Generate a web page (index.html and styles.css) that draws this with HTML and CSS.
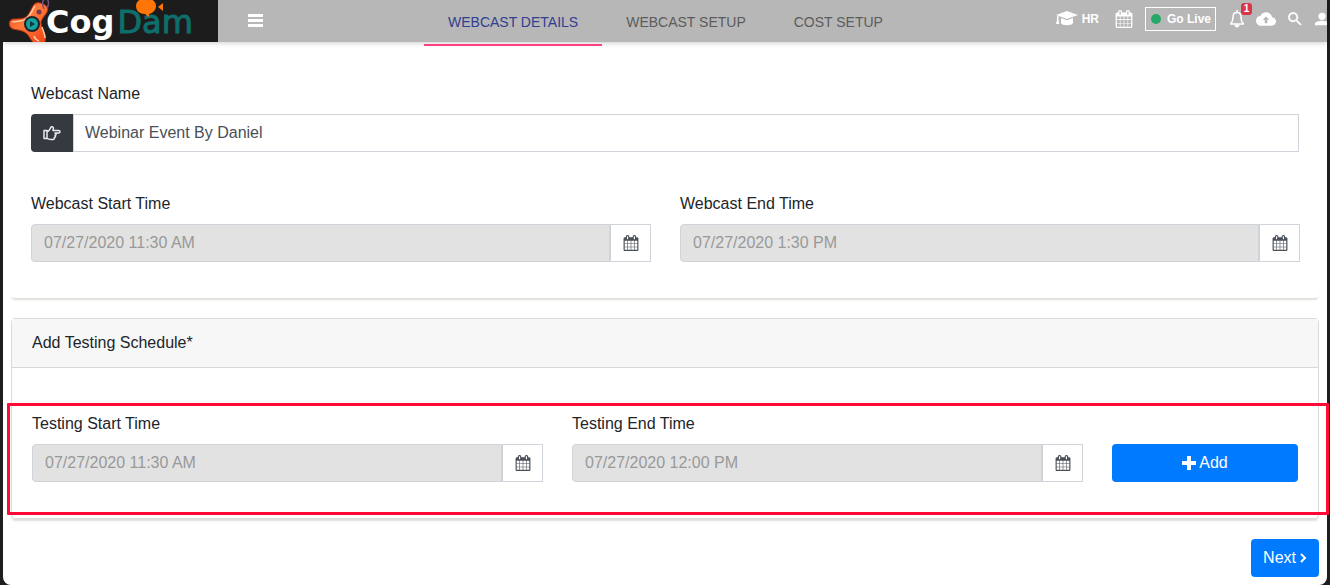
FILE: index.html
```html
<!DOCTYPE html>
<html lang="en">
<head>
<meta charset="utf-8">
<title>CogDam – Webcast Details</title>
<link rel="stylesheet" href="styles.css">
</head>
<body>
<svg class="sprite" aria-hidden="true">
  <symbol id="calendar" viewBox="0 0 1792 1792"><path d="M192 1664h288v-288h-288v288zm352 0h320v-288h-320v288zm-352-352h288v-320h-288v320zm352 0h320v-320h-320v320zm-352-384h288v-288h-288v288zm736 736h320v-288h-320v288zm-384-736h320v-288h-320v288zm768 736h288v-288h-288v288zm-384-352h320v-320h-320v320zm-352-864v-288q0-13-9.5-22.5t-22.5-9.5h-64q-13 0-22.5 9.5t-9.5 22.5v288q0 13 9.5 22.5t22.5 9.5h64q13 0 22.5-9.5t9.5-22.5zm736 864h288v-320h-288v320zm-384-384h320v-288h-320v288zm384 0h288v-288h-288v288zm32-480v-288q0-13-9.5-22.5t-22.5-9.5h-64q-13 0-22.5 9.5t-9.5 22.5v288q0 13 9.5 22.5t22.5 9.5h64q13 0 22.5-9.5t9.5-22.5zm384-64v1280q0 52-38 90t-90 38h-1408q-52 0-90-38t-38-90v-1280q0-52 38-90t90-38h128v-96q0-66 47-113t113-47h64q66 0 113 47t47 113v96h384v-96q0-66 47-113t113-47h64q66 0 113 47t47 113v96h128q52 0 90 38t38 90z"/></symbol>
</svg>
<div class="page">
  <header class="topbar">
    <a class="logo" href="#" aria-label="CogDam home">
      <svg class="logo-mark" viewBox="0 0 42 42" aria-hidden="true">
        <defs>
          <linearGradient id="flame" x1="0" y1="0" x2="1" y2="1">
            <stop offset="0" stop-color="#e8431a"/><stop offset=".45" stop-color="#ff7b3a"/><stop offset="1" stop-color="#ee3f10"/>
          </linearGradient>
        </defs>
        <path d="M25 6C27 2 31 2 35 4s6 4 4 8-6 7-6 11 3 8 4 12 1 8-3 8h-7c-4-1-5-7-9-10C14 30 9 30 5 29 0 27 0 20 5 19c6 0 11 0 14-3s4-7 6-10z" fill="url(#flame)" stroke="#b9300e"/>
        <path d="M4 22c6-1 11 0 15-4 4-3 5-8 8-12M34 27c1 4 3 7 3 11M26 36c1 3 2 4 5 5" fill="none" stroke="#ffc8a2" stroke-width="1.5"/>
        <path d="M36 9c-2-4-2-9 1-10s5 4 2 9" fill="none" stroke="#75507f" stroke-width="1.5"/>
        <circle cx="31" cy="12" r="2.5" fill="#713954"/>
        <circle cx="24" cy="24" r="8" fill="#20242a"/>
        <circle cx="24" cy="24" r="6" fill="#11a39f"/>
        <path d="M22 21l5 3-5 3z" fill="#12343b"/>
      </svg>
      <span class="wordmark"><b>Cog</b><span class="teal">Dam</span></span>
      <svg class="logo-fish" viewBox="0 0 30 17" aria-hidden="true">
        <path d="M3 6C3 1 8-2 13-2s10 3 10 8c0 4-3 7-7 8v3l-4-3C7 14 3 11 3 6zM25 7l5-4v8z" fill="#ff7606"/>
      </svg>
    </a>
    <button class="icon-btn menu" aria-label="Toggle menu">
      <svg width="15" height="13" viewBox="0 0 15 13"><path d="M0 0h15v3H0zM0 5h15v3H0zM0 10h15v3H0z" fill="#fff"/></svg>
    </button>
    <nav class="tabs">
      <a class="tab active" href="#">WEBCAST DETAILS</a>
      <a class="tab" href="#">WEBCAST SETUP</a>
      <a class="tab" href="#">COST SETUP</a>
    </nav>
    <div class="tools">
      <a class="tool hr" href="#">
        <svg width="22" height="16" viewBox="0 0 22 16" fill="#fff"><path d="M11 0l11 4-11 4L0 4z"/><path d="M5 7l6 2.200L17 7v5c-1 3-11 3-12 0zM1 5h1.500v4l1 4H0l1-4z"/></svg>
        HR
      </a>
      <button class="icon-btn cal-tool" aria-label="Calendar"><svg width="18" height="18" fill="#fff"><use href="#calendar"/></svg></button>
      <button class="live"><span class="dot"></span>Go Live</button>
      <button class="icon-btn bell" aria-label="Notifications">
        <svg width="16" height="18" viewBox="0 0 16 18"><path d="M8 0v2M1.500 14c2-2 2.500-4 2.500-7 0-3 2-4.500 4-4.500S12 4 12 7c0 3 .5 5 2.500 7z" fill="none" stroke="#fff" stroke-width="1.500" stroke-linejoin="round"/><path d="M5.500 14.500h5c0 4-5 4-5 0z" fill="#fff"/></svg>
        <span class="badge">1</span>
      </button>
      <button class="icon-btn" aria-label="Upload"><svg width="20" height="20" viewBox="0 0 24 24" fill="#fff"><path fill-rule="evenodd" d="M19.350 10.040C18.670 6.590 15.640 4 12 4 9.110 4 6.600 5.640 5.350 8.040 2.340 8.360 0 10.910 0 14c0 3.310 2.690 6 6 6h13c2.760 0 5-2.240 5-5 0-2.640-2.050-4.780-4.650-4.960zM13.500 13v4h-3v-4H8l4-4 4 4z"/></svg></button>
      <button class="icon-btn" aria-label="Search"><svg width="18" height="18" viewBox="0 0 24 24" fill="#fff" stroke="#fff" stroke-width=".5"><path d="M15.500 14h-.79l-.28-.27C15.410 12.590 16 11.110 16 9.500 16 5.910 13.090 3 9.500 3S3 5.910 3 9.500 5.910 16 9.500 16c1.610 0 3.090-.59 4.230-1.570l.27.28v.79l5 4.990L20.490 19zm-6 0C7.010 14 5 11.990 5 9.500S7.010 5 9.500 5 14 7.010 14 9.500 11.990 14 9.500 14z"/></svg></button>
      <button class="icon-btn" aria-label="Account"><svg width="18" height="18" viewBox="3 3 20 20" fill="#fff"><circle cx="12" cy="10" r="4"/><path d="M12 15c-3 0-8 1-8 3.500V20h16v-1.500c0-2.500-5-3.500-8-3.500z"/></svg></button>
    </div>
  </header>

  <main class="content">
    <section class="card details">
      <div class="field">
        <label for="name">Webcast Name</label>
        <div class="group">
          <span class="prefix"><svg width="18" height="16" viewBox="0 0 18 16" fill="none" stroke="#e9ecef" stroke-width="1.500" stroke-linejoin="round"><path d="M1 5.500h3v8H1zM4 6.500c2 0 3-2 4-4.500 2-1 3 1 2 3.500h5.500c2 0 2 2.500 0 2.500H12c1.500.5 1.500 2 0 2.300 1 .7.500 2-.7 2.200.5 1-.3 2-1.300 2H8c-2 0-3-1-4-1"/></svg></span>
          <input id="name" class="control" type="text" value="Webinar Event By Daniel">
        </div>
      </div>
      <div class="row halves">
        <div class="field">
          <label for="start">Webcast Start Time</label>
          <div class="group"><input id="start" class="control" type="text" value="07/27/2020 11:30 AM" disabled><button class="pick" aria-label="Pick webcast start"><svg width="16" height="16"><use href="#calendar"/></svg></button></div>
        </div>
        <div class="field">
          <label for="end">Webcast End Time</label>
          <div class="group"><input id="end" class="control" type="text" value="07/27/2020 1:30 PM" disabled><button class="pick" aria-label="Pick webcast end"><svg width="16" height="16"><use href="#calendar"/></svg></button></div>
        </div>
      </div>
    </section>

    <section class="card schedule">
      <h2 class="card-title">Add Testing Schedule*</h2>
      <div class="row twelfths">
        <div class="field">
          <label for="tstart">Testing Start Time</label>
          <div class="group"><input id="tstart" class="control" type="text" value="07/27/2020 11:30 AM" disabled><button class="pick" aria-label="Pick testing start"><svg width="16" height="16"><use href="#calendar"/></svg></button></div>
        </div>
        <div class="field">
          <label for="tend">Testing End Time</label>
          <div class="group"><input id="tend" class="control" type="text" value="07/27/2020 12:00 PM" disabled><button class="pick" aria-label="Pick testing end"><svg width="16" height="16"><use href="#calendar"/></svg></button></div>
        </div>
        <button class="btn add"><svg width="14" height="14" viewBox="0 0 14 14"><path d="M5 0h4v5h5v4H9v5H5V9H0V5h5z" fill="#fff"/></svg>Add</button>
      </div>
      <div class="highlight"></div>
    </section>

    <div class="actions">
      <button class="btn">Next<svg width="8" height="12" viewBox="0 0 8 12"><path d="M2 2l4 4-4 4" fill="none" stroke="#fff" stroke-width="2"/></svg></button>
    </div>
  </main>
</div>
</body>
</html>
```
FILE: styles.css
```css
* { box-sizing: border-box; }

body {
  margin: 0;
  background: #1e1e1e;
  color: #212529;
  font: 16px/24px "Liberation Sans", Arial, sans-serif;
}

button, input { font: inherit; }
a { text-decoration: none; }
svg { display: block; flex: none; }
.sprite { position: absolute; width: 0; height: 0; }

.page {
  min-height: 100vh;
  margin: 0 3px;
  background: #fff;
  border-radius: 0 0 8px 8px;
}

/* Top bar */
.topbar {
  position: relative;
  display: flex;
  height: 42px;
  background: #b7b7b7;
  box-shadow: 0 1px 5px rgba(0, 0, 0, .2);
}

.logo {
  position: relative;
  display: flex;
  flex: none;
  width: 215px;
  padding-left: 5px;
  background: #1c1c1c;
  overflow: hidden;
}

.logo-mark { width: 42px; height: 42px; margin-right: -4px; }

.wordmark {
  position: relative;
  display: flex;
  gap: 3px;
  color: #fff;
  font: 32px/44px "DejaVu Sans", sans-serif;
}

.teal { color: #0e6e6c; -webkit-text-stroke: 1px #0e6e6c; }
.logo-fish { position: absolute; top: 0; left: 130px; width: 30px; height: 17px; }

.icon-btn {
  position: relative;
  padding: 0;
  border: 0;
  background: none;
}

.menu { height: 40px; margin: 0 161px 0 30px; }

.tabs { display: flex; height: 46px; }

.tab {
  padding: 0 24px;
  border-bottom: 2px solid transparent;
  color: #5c5c5c;
  font-size: 14px;
  line-height: 44px;
  white-space: nowrap;
}

.tab.active { border-color: #ff4081; color: #303f8f; }

.tools {
  display: flex;
  align-items: center;
  gap: 10px;
  height: 37px;
  margin-left: auto;
  margin-right: -5px;
  clip-path: inset(0 5px 0 0);
}

.tool, .live {
  display: flex;
  align-items: center;
  color: #fff;
  font-size: 12px;
  font-weight: bold;
}

.hr { gap: 4px; margin-right: 6px; }
.cal-tool { margin-right: 2px; }

.live {
  gap: 6px;
  height: 24px;
  padding: 0 4px 0 5px;
  border: 1px solid #fff;
  background: none;
  white-space: nowrap;
}

.dot { width: 10px; height: 10px; border-radius: 50%; background: #27a86b; }
.bell { margin: 0 1px 0 3px; }

.badge {
  position: absolute;
  top: -7px;
  left: 12px;
  width: 11px;
  border-radius: 3px;
  background: #dc3545;
  color: #fff;
  font: bold 10px/12px "Liberation Sans", Arial, sans-serif;
}

/* Cards and form */
.content { padding: 0 8px 8px; }

.card {
  border-radius: 4px;
  box-shadow: 0 3px 2px -1px rgba(60, 50, 20, .16);
}

.details { padding: 40px 20px 36px; }
.details .row { margin-top: 40px; }

.schedule {
  position: relative;
  margin-top: 20px;
  border: 1px solid #dcdcdc;
}

.card-title {
  margin: 0;
  padding: 12px 20px;
  border-bottom: 1px solid #d8d8d8;
  background: #f7f7f7;
  font-size: 16px;
  font-weight: normal;
}

.row { display: grid; gap: 30px; }
.halves { grid-template-columns: 1fr 1fr; }
.twelfths { grid-template-columns: repeat(12, 1fr); align-items: end; padding: 44px 20px 36px; }
.twelfths .field { grid-column: span 5; }
.add { grid-column: span 2; }

.field label { display: block; margin-bottom: 8px; }
.group { display: flex; height: 38px; }
.row .group { margin-right: -1px; }

.prefix {
  display: grid;
  place-items: center;
  width: 42px;
  border-radius: 4px 0 0 4px;
  background: #343a40;
}

.control {
  flex: 1;
  min-width: 0;
  padding: 0 12px;
  border: 1px solid #ced4da;
  border-radius: 4px 0 0 4px;
  background: #fff;
  color: #495057;
}

.prefix + .control { padding-left: 11px; border-radius: 0; }
.control:disabled { background: #e2e2e2; color: #999; }

.pick {
  display: grid;
  place-items: center;
  width: 41px;
  padding: 0;
  border: 1px solid #ced4da;
  background: #fff;
  fill: #495057;
}

.btn {
  display: flex;
  align-items: center;
  justify-content: center;
  gap: 3px;
  height: 38px;
  padding: 0 12px;
  border: 0;
  border-radius: 4px;
  background: #007bff;
  color: #fff;
}

.actions { display: flex; justify-content: flex-end; padding-top: 20px; }

/* Marks the schedule entry row */
.highlight {
  position: absolute;
  inset: 84px -11px 3px -5px;
  border: 3px solid #ff0a37;
  border-radius: 1px;
  pointer-events: none;
}
```
